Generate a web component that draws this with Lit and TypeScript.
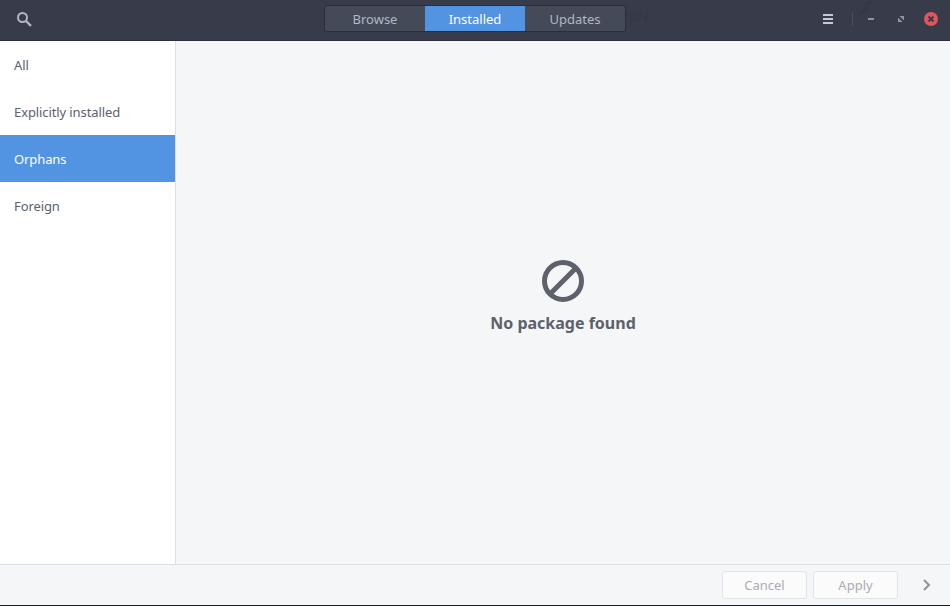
import { LitElement, html, css } from "lit";
import { customElement } from "lit/decorators.js";

@customElement("app-root")
export class AppRoot extends LitElement {
  static styles = css`
    :host { display: flex; flex-direction: column; width: 950px; height: 606px; overflow: hidden;
      font-family: "Noto Sans", sans-serif; font-size: 13px; color: #5c616c; background: #f5f6f7; }
    .header { position: relative; height: 41px; flex: none; box-sizing: border-box; background: #383c4a; border-bottom: 1px solid #2b2e39; display: grid;
      grid-template-columns: 1fr auto 1fr; align-items: center; padding-bottom: 3px; }
    .ghost-text { position: absolute; left: 612px; top: 6px; font-size: 14px; color: #343845; }
    .ghost-icon { position: absolute; left: 857px; top: 1px; }
    .left { display: flex; align-items: center; padding-left: 16px; }
    .right { position: relative; display: flex; align-items: center; justify-content: flex-end; }
    .tabs { position: relative; display: flex; height: 27px; box-sizing: border-box; border: 1px solid #2b2e39; border-radius: 3px; overflow: hidden; background: #444a58; }
    .tab { width: 100px; display: flex; align-items: center; justify-content: center; color: #afb8c6; }
    .tab.on { background: #5294e2; color: #fff; }
    .icon { display: block; }
    .menu { margin-right: 19px; }
    .sep { width: 1px; height: 14px; background: #4a4f5d; margin-right: 15px; }
    .min { margin-right: 24px; }
    .max { margin-right: 20px; }
    .close { margin-right: 12px; }
    .body { flex: 1; display: flex; min-height: 0; }
    .side { width: 176px; box-sizing: border-box; flex: none; background: #fff; border-right: 1px solid #dcdfe3; }
    .row { height: 47px; display: flex; align-items: center; padding-left: 14px; letter-spacing: -0.1px; }
    .row.on { background: #5294e2; color: #fff; }
    .main { flex: 1; display: flex; flex-direction: column; align-items: center; justify-content: center; gap: 10px; padding-bottom: 11px; }
    .msg { font-size: 16px; font-weight: 700; line-height: 22px; }
    .footer { height: 42px; box-sizing: border-box; flex: none; border-top: 1px solid #dcdfe3; border-bottom: 1px solid #1b1d24; background: #f5f6f7;
      display: flex; align-items: center; justify-content: flex-end; }
    .btn { width: 85px; height: 28px; box-sizing: border-box; border: 1px solid #dfe3ec; border-radius: 3px; background: #fbfbfc; color: #a9acb2;
      display: flex; align-items: center; justify-content: center; font: inherit; padding: 0; }
    .cancel { margin-right: 6px; }
    .apply { margin-right: 25px; }
    .chev { margin-right: 19px; }
  `;

  render() {
    return html`
      <div class="header">
        <div class="ghost-text" aria-hidden="true">Apply</div>
        <svg class="ghost-icon" width="16" height="15" viewBox="0 0 16 15" fill="none" stroke="#343845" stroke-width="3">
          <path d="M2 14l8-8"/><path d="M10 7a3.5 3.5 0 0 1 4-5"/>
        </svg>
        <div class="left">
          <svg class="icon" width="16" height="16" viewBox="0 0 16 16" fill="none" stroke="#afb8c6">
            <circle cx="6.5" cy="6.5" r="4.5" stroke-width="2"/>
            <path d="M10 10l5 5" stroke-width="2.4"/>
          </svg>
        </div>
        <div class="tabs">
          <div class="tab">Browse</div>
          <div class="tab on">Installed</div>
          <div class="tab">Updates</div>
        </div>
        <div class="right">
          <svg class="icon menu" width="10" height="10" viewBox="0 0 10 10" fill="#c4cad6">
            <rect y="0" width="10" height="2"/><rect y="4" width="10" height="2"/><rect y="8" width="10" height="2"/>
          </svg>
          <div class="sep"></div>
          <svg class="icon min" width="6" height="2" viewBox="0 0 6 2"><rect width="6" height="2" fill="#90939b"/></svg>
          <svg class="icon max" width="6" height="6" viewBox="0 0 6 6" fill="#90939b"><path d="M0 6V1.5L4.5 6zM6 0v4.5L1.5 0z"/></svg>
          <svg class="icon close" width="14" height="14" viewBox="0 0 14 14">
            <circle cx="7" cy="7" r="7" fill="#e0575b"/>
            <path d="M4.5 4.5l5 5M9.5 4.5l-5 5" stroke="#383c4a" stroke-width="2"/>
          </svg>
        </div>
      </div>
      <div class="body">
        <div class="side">
          <div class="row">All</div>
          <div class="row">Explicitly installed</div>
          <div class="row on">Orphans</div>
          <div class="row">Foreign</div>
        </div>
        <div class="main">
          <svg class="icon" width="42" height="42" viewBox="0 0 42 42" fill="none" stroke="#5c616c" stroke-width="5">
            <circle cx="21" cy="21" r="18.5"/>
            <path d="M8 34L34 8"/>
          </svg>
          <div class="msg">No package found</div>
        </div>
      </div>
      <div class="footer">
        <div class="btn cancel">Cancel</div>
        <div class="btn apply">Apply</div>
        <svg class="icon chev" width="8" height="12" viewBox="0 0 8 12" fill="none" stroke="#8f9297" stroke-width="2"><path d="M1 1l5 5-5 5"/></svg>
      </div>
    `;
  }
}
